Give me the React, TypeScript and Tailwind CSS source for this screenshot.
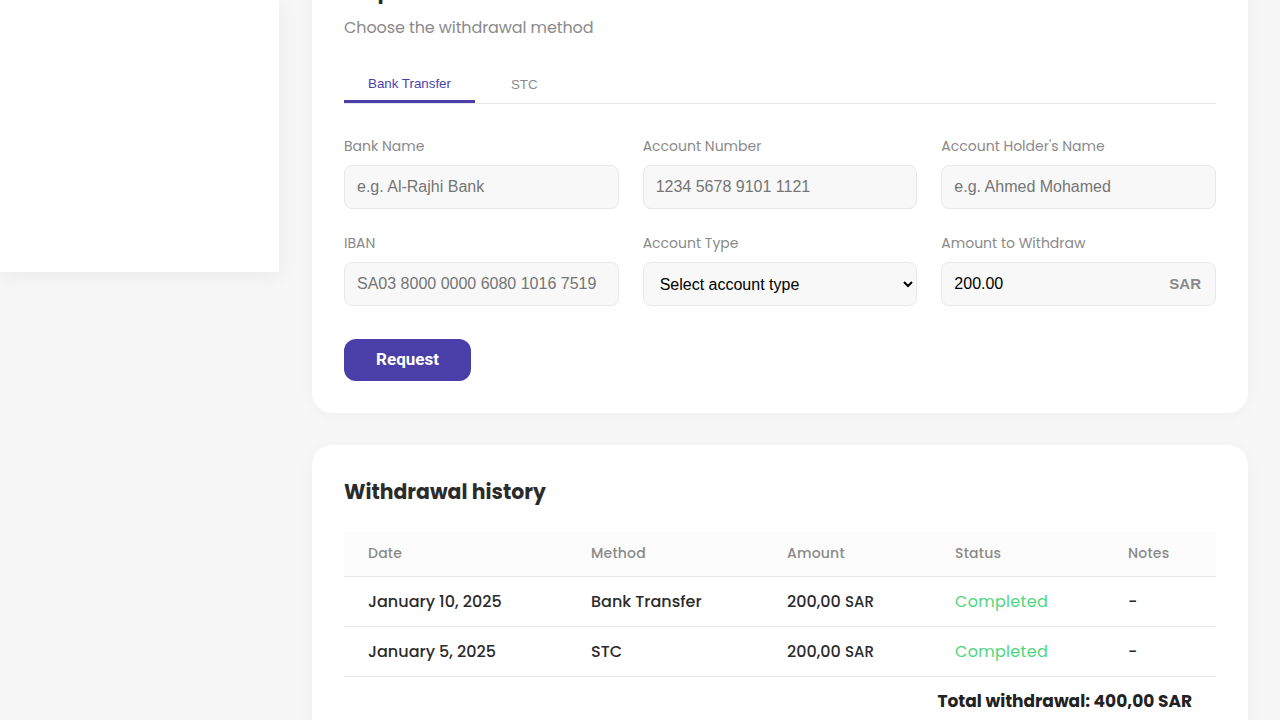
import React from "react";

const poppins = { fontFamily: "Poppins, Inter, 'Noto Sans', sans-serif" };

export default function App() {
  return (
    <div className="h-[720px] w-[1280px] overflow-hidden bg-[#f7f7f7] flex items-start" style={poppins}>
      <aside className="w-[279px] h-[272px] bg-white shadow-[0_4px_20px_rgba(0,0,0,0.06)] shrink-0" />
      <main className="ml-[33px] w-[936px] flex flex-col gap-8 -mt-[56px]">
        <section className="bg-white rounded-[20px] p-8 shadow-[0_2px_16px_rgba(0,0,0,0.04)]">
          <h1 className="text-[20.4px] leading-[30px] font-bold text-[#2b2b2b]">Request withdrawal</h1>
          <p className="mt-[10px] text-[16px] leading-[24px] text-[#8a8a8a] tracking-[-0.1px]">Choose the withdrawal method</p>
          <div className="mt-[23px] flex gap-3 border-b border-[#e6e6e6]" style={{ fontFamily: "'Liberation Sans', Arial, sans-serif" }}>
            <button className="h-[40px] pt-[4px] px-6 text-[13.333px] text-[#4b3fae] border-b-[3px] border-[#4b3fae] -mb-px">Bank Transfer</button>
            <button className="h-[40px] pt-[4px] px-6 text-[13.333px] text-[#8a8a8a]">STC</button>
          </div>
          <div className="mt-8 grid grid-cols-3 gap-x-6 gap-y-6">
            <Field label="Bank Name"><Input placeholder="e.g. Al-Rajhi Bank" /></Field>
            <Field label="Account Number"><Input placeholder="1234 5678 9101 1121" /></Field>
            <Field label="Account Holder's Name"><Input placeholder="e.g. Ahmed Mohamed" /></Field>
            <Field label="IBAN"><Input placeholder="SA03 8000 0000 6080 1016 7519" /></Field>
            <Field label="Account Type">
              <select
                className="h-[44px] w-full rounded-lg border border-[#e8e8e8] bg-[#f8f8f8] px-3 text-[16px] text-black"
                style={{ fontFamily: "'Liberation Sans', Arial, sans-serif" }}
                defaultValue=""
              >
                <option value="">Select account type</option>
                <option value="savings">Savings</option>
                <option value="current">Current</option>
              </select>
            </Field>
            <Field label="Amount to Withdraw">
              <div className="relative">
                <Input defaultValue="200.00" />
                <span
                  className="absolute right-[15px] top-1/2 -translate-y-1/2 text-[15px] font-bold text-[#8a8a8a]"
                  style={{ fontFamily: "'Liberation Sans', Arial, sans-serif" }}
                >
                  SAR
                </span>
              </div>
            </Field>
          </div>
          <button
            className="mt-[33px] h-[42px] w-[127px] rounded-xl bg-[#4a3fa8] text-white text-[17px] font-bold"
            style={{ fontFamily: "Roboto, 'Liberation Sans', sans-serif" }}
          >
            Request
          </button>
        </section>

        <section className="bg-white rounded-[20px] px-8 pt-8 pb-8 shadow-[0_2px_16px_rgba(0,0,0,0.04)]">
          <h2 className="text-[20.4px] leading-[30px] font-bold text-[#2b2b2b]">Withdrawal history</h2>
          <table className="mt-[25px] w-full table-fixed border-collapse">
            <colgroup>
              <col className="w-[223px]" />
              <col className="w-[196px]" />
              <col className="w-[168px]" />
              <col className="w-[173px]" />
              <col />
            </colgroup>
            <thead>
              <tr className="h-[44px] bg-[#fcfcfc] border-b border-[#e8e8e8] text-left">
                {["Date", "Method", "Amount", "Status", "Notes"].map((h) => (
                  <th key={h} className="px-6 text-[14px] font-medium text-[#8a8a8a] tracking-[0.2px]">{h}</th>
                ))}
              </tr>
            </thead>
            <tbody>
              {[
                ["January 10, 2025", "Bank Transfer"],
                ["January 5, 2025", "STC"],
              ].map(([d, m]) => (
                <tr key={d} className="h-[50px] border-b border-[#e8e8e8]">
                  <td className="px-6 pt-[2px] text-[16px] font-medium text-[#2b2b2b]">{d}</td>
                  <td className="px-6 pt-[2px] text-[16px] font-medium text-[#2b2b2b]">{m}</td>
                  <td className="px-6 pt-[2px] text-[16px] font-medium text-[#2b2b2b]">
                    200,00 <span className="text-[15px]">SAR</span>
                  </td>
                  <td className="px-6 pt-[2px] text-[16px] text-[#4fd67e] tracking-[0.3px]">Completed</td>
                  <td className="px-6 pt-[2px] text-[16px] font-medium text-[#2b2b2b]">-</td>
                </tr>
              ))}
            </tbody>
          </table>
          <div className="mt-[12px] pr-6 text-right text-[17px] font-bold text-[#222]">
            Total withdrawal: 400,00 SAR
          </div>
        </section>
      </main>
    </div>
  );
}

function Field({ label, children }: { label: string; children: React.ReactNode }) {
  return (
    <div className="flex flex-col">
      <label className="mb-[9px] text-[14px] leading-[20px] text-[#8a8a8a]">{label}</label>
      {children}
    </div>
  );
}

function Input(props: React.InputHTMLAttributes<HTMLInputElement>) {
  return (
    <input
      {...props}
      className="h-[44px] w-full rounded-lg border border-[#e8e8e8] bg-[#f8f8f8] px-[12px] text-[16px] text-black placeholder:text-[#757575] outline-none"
      style={{ fontFamily: "'Liberation Sans', Arial, sans-serif" }}
    />
  );
}
